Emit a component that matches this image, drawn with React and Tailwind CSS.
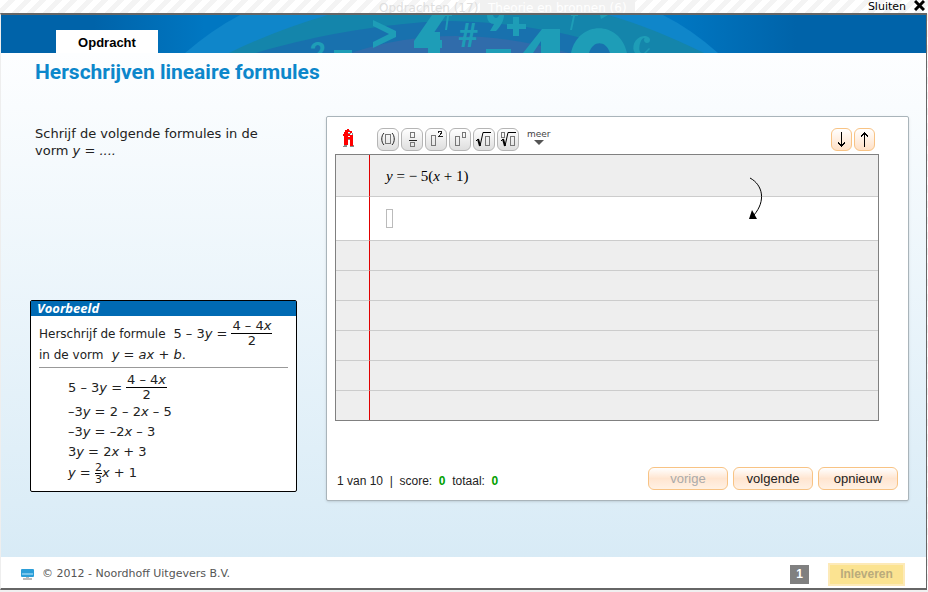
import React from "react";

const serif = "font-['Liberation_Serif',serif]";
const arial = "font-['Liberation_Sans',sans-serif]";

function Frac({ top, bottom }) {
  return (
    <span className="inline-flex flex-col items-center text-center">
      <span className="border-b border-black px-px leading-[14px]">{top}</span>
      <span className="leading-[14px]">{bottom}</span>
    </span>
  );
}

function HeaderArt() {
  return (
    <svg className="h-full w-full" viewBox="0 0 925 38" preserveAspectRatio="none" aria-hidden="true">
      <defs>
        <linearGradient id="bar">
          <stop offset="0.1" stopColor="#0063a9" />
          <stop offset="0.22" stopColor="#0077c2" />
          <stop offset="0.73" stopColor="#0077c2" />
          <stop offset="0.86" stopColor="#0063a9" />
        </linearGradient>
      </defs>
      <rect width="925" height="38" fill="url(#bar)" />
      <path d="M184 38Q212 14 239 0H662Q690 14 717 38Z" fill="#0f86ca" />
      <path d="M228 38Q275 15 327 0H607Q650 12 703 38Z" fill="#1485ab" />
      <path d="M255 38C340 12 425 6 450 6C520 7 590 22 627 38Z" fill="#1871ae" />
      <path d="M350 38Q450 4 568 38Z" fill="#306cab" />
      <g fill="#1e9db7" fontWeight="bold" fontFamily="Roboto, sans-serif">
        <text x="309" y="47" fontSize="28">2</text>
        <rect x="333" y="35" width="18" height="3" />
        <path d="M372 5L395 16V22L372 33V27L388 19L372 11Z" />
        <path d="M431 0H445L428 25H427V17H439V25H441V33H439V38H427V33H413V26Z" />
        <text x="457" y="32" fontSize="34">#</text>
        <path d="M486 0H503C503 6 499 12 495 16H489L493 9C489 9 486 6 486 0ZM492 0C493 4 497 4 498 0Z" fillRule="evenodd" />
        <path d="M512 2H518V9H525V14H518V21H512V14H506V9H512Z" />
        <path d="M443 0H451V1H448L446 15H444L446 1H443ZM570 0H577V1H574L571 15H569L572 1H570Z" />
        <rect x="485" y="34" width="25" height="4" />
        <path d="M522 38L541 14H559V38H540V26L532 38Z" />
        <path d="M570 38C577 5 619 5 626 38H609C605 25 592 25 588 38Z" />
        <path d="M599 0L600 4L607 0Z" />
        <path d="M649 25C649 29 643 29 643 25C643 24 644 23 643 23C639 23 636 38 641 38H634C630 33 633 22 643 21C647 21 649 23 649 25ZM648 33L643 38H645L649 34Z" />
      </g>
    </svg>
  );
}

function Tool({ label, children }) {
  return (
    <button
      type="button"
      aria-label={label}
      className="flex h-[23px] w-[22px] items-center justify-center rounded-md border border-[#b5b5b5] bg-linear-to-b from-white to-[#dedede]"
    >
      <svg width="20" height="21" viewBox="0 0 20 21" fill="none" stroke="#777" shapeRendering="crispEdges">
        {children}
      </svg>
    </button>
  );
}

function Arrow({ label, children }) {
  return (
    <button
      type="button"
      aria-label={label}
      className="flex h-[23px] w-[21px] items-center justify-center rounded-md border border-[#f8c384] bg-linear-to-b from-white to-[#ffe0c6]"
    >
      <svg width="9" height="15" viewBox="0 0 9 15" fill="none" stroke="#000" shapeRendering="crispEdges">
        {children}
      </svg>
    </button>
  );
}

function Action({ children, disabled }) {
  return (
    <button
      type="button"
      disabled={disabled}
      className={`h-[23px] w-20 rounded-md border border-[#f8c384] bg-linear-to-b from-white via-[#ffe5d0] to-[#fff1e4] text-[13px] leading-5 text-[#222] disabled:text-[#aaa] ${arial}`}
    >
      {children}
    </button>
  );
}

function Example() {
  return (
    <section className="mt-[141px] mr-[29px] ml-[-5px] rounded-xs border border-black bg-white pb-[7px] text-[13px] text-[#222]">
      <h2 className="bg-[#006ab3] px-1.5 text-[13px] leading-[15px] font-bold text-white italic font-['Open_Sans',sans-serif]">
        Voorbeeld
      </h2>
      <div className="mx-2 border-b border-[#999] pt-[3px] pb-[5px]">
        <div className="flex items-center gap-1 whitespace-nowrap">
          <span className="text-[12px]">Herschrijf de formule&nbsp;</span>
          <span>5 – 3<i>y</i> =</span>
          <Frac top={<>4 – 4<i>x</i></>} bottom="2" />
        </div>
        <p className="leading-[14px]">
          <span className="text-[12px]">in de vorm</span>&nbsp; <i>y</i> = <i>ax</i> + <i>b</i>.
        </p>
      </div>
      <div className="pt-[5px] pl-[37px]">
        <div className="flex items-center gap-1">
          <span>5 – 3<i>y</i> =</span>
          <Frac top={<>4 – 4<i>x</i></>} bottom="2" />
        </div>
        <p className="leading-5">–3<i>y</i> = 2 – 2<i>x</i> – 5</p>
        <p className="leading-5">–3<i>y</i> = –2<i>x</i> – 3</p>
        <p className="leading-5">3<i>y</i> = 2<i>x</i> + 3</p>
        <div className="flex h-[22px] items-center">
          <span><i>y</i> =&nbsp;</span>
          <span className="flex flex-col text-[11px]">
            <span className="border-b border-black leading-[11px]">2</span>
            <span className="leading-[11px]">3</span>
          </span>
          <span><i>x</i> + 1</span>
        </div>
      </div>
    </section>
  );
}

function Editor() {
  return (
    <section className="h-[385px] flex-1 rounded-xs border border-[#a9b4ba] bg-white px-2 shadow-sm">
      <div className="flex h-[37px] items-center pt-2 pr-[25px] pl-2">
        <svg className="mb-1" width="12" height="20" viewBox="0 0 12 20" shapeRendering="crispEdges" role="img" aria-label="fi">
          <path d="M2 2H4V1H6V2H7V4H5V6H7V8H5V17H1V8H0V6H1V4H2Z" fill="#f00" />
          <path d="M7 3H9V5H7ZM7 7H10V18H7V12H5V9H7Z" fill="#f00" />
          <path d="M6 2H7V3H6ZM5 5H8V6H5ZM9 5H10V7H9ZM5 11H7V12H5ZM1 17H4V19H0V18H1ZM7 18H10V17H11V19H7Z" fill="#888" />
        </svg>
        <div className="ml-[22px] flex gap-0.5">
          <Tool label="Haakjes">
            <rect x="7.500" y="5.500" width="5" height="9" />
            <path d="M6 4C3 7 3 13 6 16M14 4C17 7 17 13 14 16" stroke="#222" shapeRendering="auto" />
          </Tool>
          <Tool label="Breuk">
            <path d="M8.500 3.500H12.500V8.500H8.500ZM8.500 13.500H12.500V17.500H8.500Z" />
            <path d="M7 11H15" stroke="#222" />
          </Tool>
          <Tool label="Kwadraat">
            <rect x="5.500" y="6.500" width="4" height="10" />
            <path d="M12 3.500L13 2.500H15L15.500 4L12.500 7.500H16.500" stroke="#222" />
          </Tool>
          <Tool label="Macht">
            <rect x="5.500" y="7.500" width="4" height="9" />
            <rect x="12.500" y="3.500" width="3" height="5" />
          </Tool>
          <Tool label="Wortel">
            <path d="M2 12L4 10M6 17L9 3.500H17" stroke="#000" shapeRendering="auto" />
            <path d="M4 10L6 17" stroke="#000" strokeWidth="2" shapeRendering="auto" />
            <rect x="11.500" y="7.500" width="4" height="9" />
          </Tool>
          <Tool label="N-de machtswortel">
            <path d="M3 12L5 10M7 17L10 3.500H18" stroke="#000" shapeRendering="auto" />
            <path d="M5 10L7 17" stroke="#000" strokeWidth="2" shapeRendering="auto" />
            <rect x="12.500" y="7.500" width="4" height="9" />
            <rect x="3.500" y="3.500" width="3" height="5" />
          </Tool>
        </div>
        <button type="button" className="ml-2 flex flex-col items-center pb-1 text-[9px] leading-[9px] text-[#444] font-['DejaVu_Sans',sans-serif]">
          meer
          <svg width="10" height="6" viewBox="0 0 10 6" aria-hidden="true"><path d="M0 1H10L5 6Z" fill="#555" /></svg>
        </button>
        <div className="ml-auto flex gap-0.5">
          <Arrow label="Omlaag"><path d="M4.500 0V14M1 10.500L4.500 14L8 10.500" /></Arrow>
          <Arrow label="Omhoog"><path d="M4.500 1V15M1 4.500L4.500 1L8 4.500" /></Arrow>
        </div>
      </div>

      <div className="mr-[21px] border border-[#808080] bg-[#eee]">
        <div className="flex h-[42px]">
          <div className="w-[34px] border-r border-b border-r-[#e00000] border-b-[#ccc]" />
          <p className={`flex-1 border-b border-[#ccc] pt-[11px] pl-4 text-[15px] leading-5 text-black ${serif}`}>
            <i>y</i> = − 5(<i>x</i> + 1)
          </p>
          <div className="relative w-[129px] border-b border-[#ccc]">
            <svg className="absolute top-[22px] left-0" width="16" height="44" viewBox="0 0 16 44" aria-hidden="true">
              <path d="M1 1C14 8 17 24 5 38" fill="none" stroke="#000" />
              <path d="M3 33L8 42H0Z" fill="#000" />
            </svg>
          </div>
        </div>
        <div className="flex h-11 bg-white">
          <div className="w-[34px] border-r border-b border-r-[#e00000] border-b-[#ccc]" />
          <div className="flex flex-1 items-center border-b border-[#ccc] pl-4">
            <input aria-label="Antwoord" className="h-[19px] w-[7px] border border-[#bbb] outline-none" />
          </div>
        </div>
        {[0, 1, 2, 3, 4].map((row) => (
          <div key={row} className="flex h-[30px]">
            <div className="w-[34px] border-r border-b border-r-[#e00000] border-b-[#ccc]" />
            <div className="flex-1 border-b border-[#ccc]" />
          </div>
        ))}
        <div className="h-[29px] w-[34px] border-r border-[#e00000]" />
      </div>

      <div className="mt-[46px] flex items-center justify-between px-0.5">
        <p className={`pt-1 text-[12px] text-[#222] ${arial}`}>
          1 van 10 &nbsp;|&nbsp; score: &nbsp;<b className="text-[#00a000]">0</b> &nbsp;totaal: &nbsp;<b className="text-[#00a000]">0</b>
        </p>
        <div className="flex gap-[5px]">
          <Action disabled>vorige</Action>
          <Action>volgende</Action>
          <Action>opnieuw</Action>
        </div>
      </div>
    </section>
  );
}

export default function App() {
  return (
    <div className="flex min-h-screen flex-col bg-[repeating-linear-gradient(135deg,#fff_0_6px,#f4f4f4_6px_11px)] font-['DejaVu_Sans',sans-serif]">
      <div className="flex h-[13px] justify-end gap-1.5 overflow-hidden pr-[3px]">
        <div className="mr-auto flex pl-[371px] text-[12px] leading-[17px] whitespace-nowrap">
          <span className="w-[109px] pl-2 text-[#dedede]">Opdrachten (17)</span>
          <span className="bg-[#f1f1f1] px-2 text-white">Theorie en bronnen (6)</span>
        </div>
        <button type="button" className="flex items-center gap-2 text-[11px] leading-[13px] text-black">
          Sluiten
          <svg className="mb-1" width="11" height="12" viewBox="0 0 11 12" stroke="#000" strokeWidth="3" aria-hidden="true">
            <path d="M1 2L10 11M10 2L1 11" />
          </svg>
        </button>
      </div>

      <main className="mr-[1px] flex flex-1 flex-col border-x border-y-2 border-[#666] border-l-[#eee] bg-white">
        <header className="grid h-[38px] overflow-hidden">
          <div className="col-start-1 row-start-1 h-[38px]"><HeaderArt /></div>
          <nav className="z-10 col-start-1 row-start-1 flex items-end pl-[55px]">
            <a href="#opdracht" className={`flex h-[23px] w-[102px] items-center justify-center bg-white pt-0.5 text-[13px] font-bold text-black ${arial}`}>
              Opdracht
            </a>
          </nav>
        </header>

        <div className="flex-1 bg-linear-to-b from-[#fdfeff] to-[#d8ebf6] pr-[17px] pb-14 pl-[34px]">
          <h1 className="pt-1.5 text-[21px] leading-[26px] font-bold whitespace-nowrap text-[#0c87cb] font-['Roboto',sans-serif]">
            Herschrijven lineaire formules
          </h1>
          <div className="mt-[31px] flex">
            <div className="w-[291px]">
              <p className="w-60 pt-[9px] text-[13px] leading-[17px] text-[#222]">
                Schrijf de volgende formules in de vorm <i>y</i> = <i>....</i>
              </p>
              <Example />
            </div>
            <Editor />
          </div>
        </div>

        <footer className="flex h-[31px] items-center pt-[3px] pr-[21px] pl-5">
          <svg width="13" height="11" viewBox="0 0 13 11" aria-hidden="true">
            <rect width="13" height="8" rx="1" fill="#2b9ed8" />
            <rect x="1" y="4" width="11" height="2" fill="#77c5ec" />
            <path d="M5 8H8V9H11V11H2V9H5Z" fill="#bbb" />
          </svg>
          <p className="ml-2 text-[11px] text-[#555]">© 2012 - Noordhoff Uitgevers B.V.</p>
          <span className={`ml-auto flex size-[19px] items-center justify-center bg-[#808080] text-[12px] font-bold text-white ${arial}`}>1</span>
          <button type="button" disabled className={`ml-[19px] h-[23px] w-[77px] border-2 border-[#fdeab8] bg-[#fbe391] text-[12px] leading-4 font-bold text-[#b9ab7c] ${arial}`}>
            Inleveren
          </button>
        </footer>
      </main>
      <div className="h-[2px] bg-[#f0f0f0]" />
    </div>
  );
}
